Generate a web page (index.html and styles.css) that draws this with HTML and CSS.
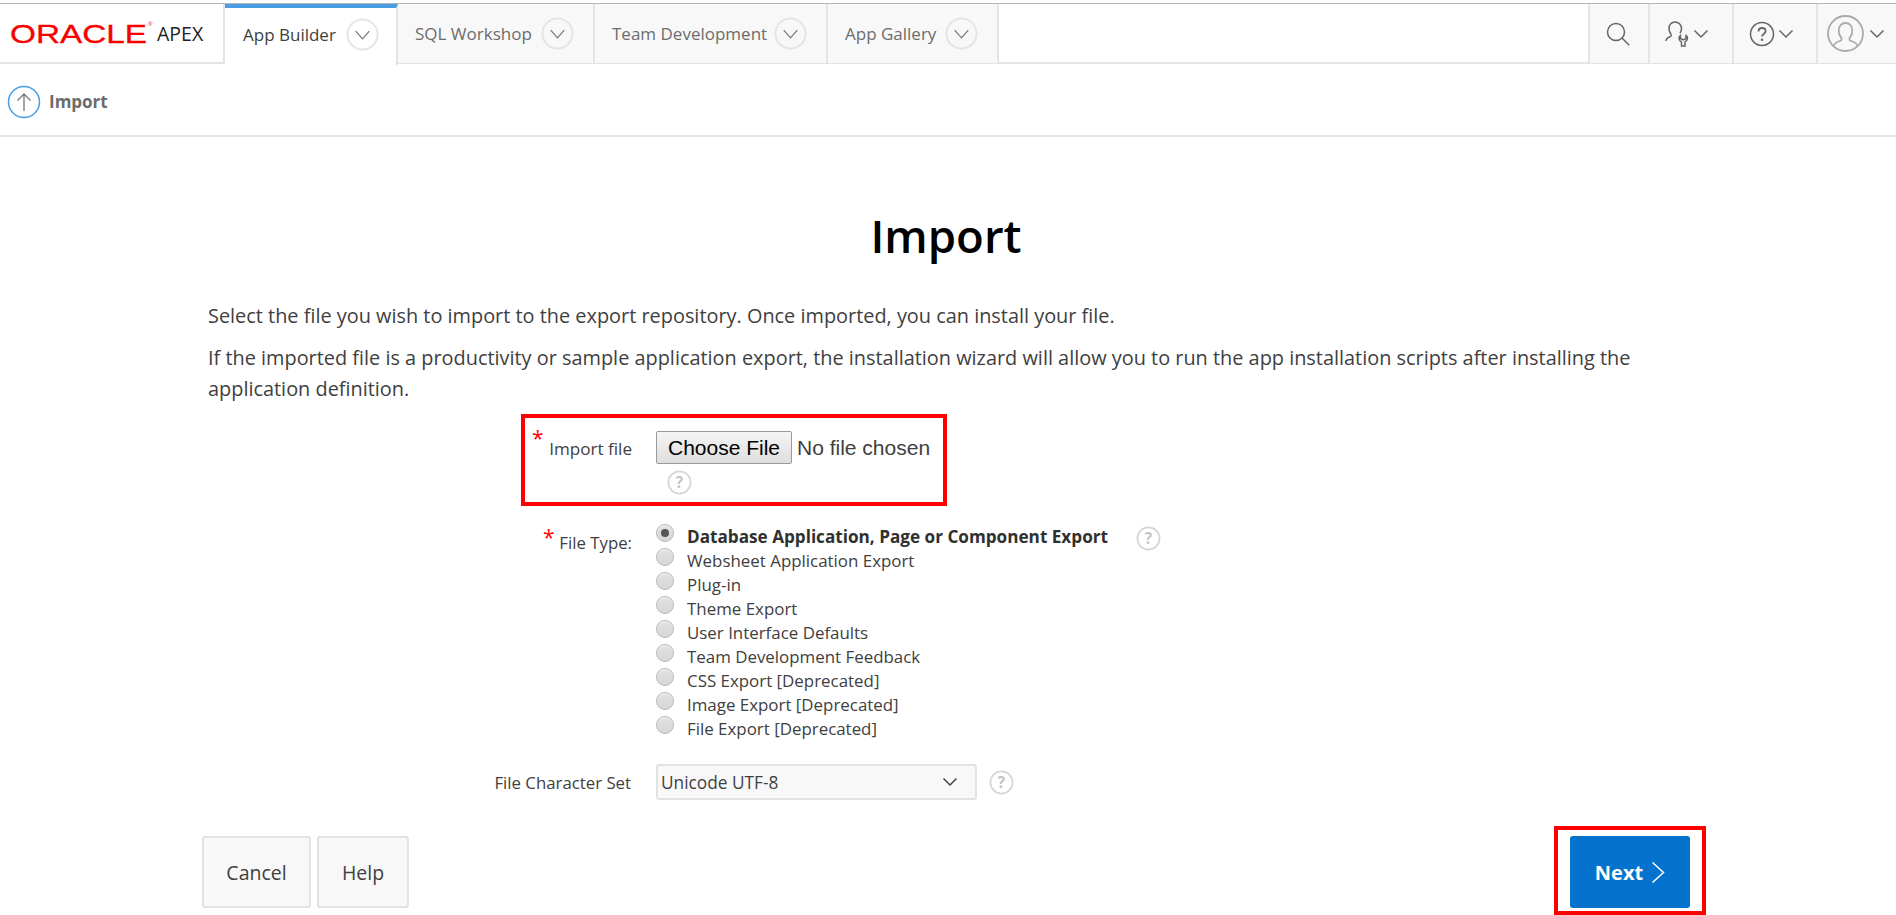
FILE: index.html
```html
<!DOCTYPE html>
<html lang="en">
<head>
<meta charset="utf-8">
<title>Import</title>
<link rel="stylesheet" href="styles.css">
</head>
<body>
<header class="topbar">
  <div class="logo">
    <div class="logo-mark"><span class="logo-oracle">ORACLE</span><span class="logo-reg">®</span></div>
    <span class="logo-apex">APEX</span>
  </div>
  <nav class="tabs">
    <div class="tab tab-active w-builder"><span>App Builder</span><svg class="tab-caret" viewBox="0 0 34 34"><circle cx="17" cy="17" r="15.5"/><path class="c" d="M10 13.5l7 8 7-8"/></svg></div>
    <div class="tab w-sql"><span>SQL Workshop</span><svg class="tab-caret" viewBox="0 0 34 34"><circle cx="17" cy="17" r="15.5"/><path class="c" d="M10 13.5l7 8 7-8"/></svg></div>
    <div class="tab w-team"><span>Team Development</span><svg class="tab-caret" viewBox="0 0 34 34"><circle cx="17" cy="17" r="15.5"/><path class="c" d="M10 13.5l7 8 7-8"/></svg></div>
    <div class="tab w-gallery"><span>App Gallery</span><svg class="tab-caret" viewBox="0 0 34 34"><circle cx="17" cy="17" r="15.5"/><path class="c" d="M10 13.5l7 8 7-8"/></svg></div>
  </nav>
  <div class="tools">
    <div class="tool w-search"><svg width="26" height="26" viewBox="0 0 26 26" class="ico"><circle cx="11" cy="11" r="8.5"/><path d="M17.2 17.2l7 7"/></svg></div>
    <div class="tool w-admin">
      <svg width="26" height="26" viewBox="0 0 26 26" class="ico"><path d="M1 20c0-3 2-3.500 4-4.200 1.300-.5 1.600-1.800.8-3C4.300 11 4 9.500 4 7.500 4 3.700 6.700 1 10 1s6.500 2.700 6.500 6.500c0 1.800-.5 3.300-1.500 4.800"/><path d="M15.500 14.500c-1.700 1-2 3.700-.5 5.200l1.500 1.300V25h3.500v-4l1.500-1.300c1.500-1.500 1.200-4.200-.5-5.200v3l-2.700 1.500-2.800-1.500z"/></svg>
      <svg width="16" height="10" viewBox="0 0 16 10" class="ico"><path d="M1.500 1.500l6.500 6.500 6.500-6.500"/></svg>
    </div>
    <div class="tool w-help">
      <svg width="26" height="26" viewBox="0 0 26 26" class="ico"><circle cx="13" cy="13" r="11.500"/><path class="q" d="M9.500 10.500c0-2.200 1.600-3.500 3.600-3.500s3.500 1.300 3.500 3.200c0 2.800-3.600 2.800-3.600 5.400"/><circle class="dot" cx="13" cy="18.800" r="1.200"/></svg>
      <svg width="16" height="10" viewBox="0 0 16 10" class="ico"><path d="M1.500 1.500l6.500 6.500 6.500-6.500"/></svg>
    </div>
    <div class="tool w-user">
      <svg width="37" height="37" viewBox="0 0 37 37" class="avatar"><circle cx="18.500" cy="18.500" r="17.500"/><path d="M6.500 31c1-3.500 3.500-4 6.500-5 2-.7 2-2.500 1-3.700-1.500-1.800-2.300-4-2.300-6.800 0-4.500 2.800-7.500 6.800-7.500s6.800 3 6.800 7.500c0 2.800-.8 5-2.300 6.800-1 1.200-1 3 1 3.700 3 1 5.500 1.500 6.500 5"/></svg>
      <svg width="16" height="10" viewBox="0 0 16 10" class="ico"><path d="M1.500 1.500l6.500 6.500 6.500-6.500"/></svg>
    </div>
  </div>
</header>

<div class="crumbbar">
  <svg class="up-icon" width="34" height="34" viewBox="0 0 34 34"><circle cx="17" cy="17" r="15.500"/><path d="M17 26V9M10.500 15.500L17 9l6.500 6.500"/></svg>
  <span class="crumb-text">Import</span>
</div>

<main class="page">
  <h1 class="title">Import</h1>
  <p class="intro intro-first">Select the file you wish to import to the export repository. Once imported, you can install your file.</p>
  <p class="intro">If the imported file is a productivity or sample application export, the installation wizard will allow you to run the app installation scripts after installing the application definition.</p>

  <form class="form">
    <div class="highlight-row">
      <div class="row row-file">
        <div class="label label-file"><span class="req">*</span>Import file</div>
        <div class="field">
          <div class="file-line"><button type="button" class="file-btn">Choose File</button><span class="file-none">No file chosen</span></div>
          <svg class="help help-file" viewBox="0 0 26 26"><circle cx="13" cy="13" r="11.500"/><text x="13" y="18.500" text-anchor="middle">?</text></svg>
        </div>
      </div>
    </div>

    <div class="row row-type">
      <div class="label label-type"><span class="req">*</span>File Type:</div>
      <div class="options">
        <div class="opt"><span class="radio radio-on"></span><b>Database Application, Page or Component Export</b><svg class="help help-opt" viewBox="0 0 26 26"><circle cx="13" cy="13" r="11.500"/><text x="13" y="18.500" text-anchor="middle">?</text></svg></div>
        <div class="opt"><span class="radio"></span>Websheet Application Export</div>
        <div class="opt"><span class="radio"></span>Plug-in</div>
        <div class="opt"><span class="radio"></span>Theme Export</div>
        <div class="opt"><span class="radio"></span>User Interface Defaults</div>
        <div class="opt"><span class="radio"></span>Team Development Feedback</div>
        <div class="opt"><span class="radio"></span>CSS Export [Deprecated]</div>
        <div class="opt"><span class="radio"></span>Image Export [Deprecated]</div>
        <div class="opt"><span class="radio"></span>File Export [Deprecated]</div>
      </div>
    </div>

    <div class="row row-charset">
      <div class="label label-charset">File Character Set</div>
      <div class="select"><span>Unicode UTF-8</span><svg width="16" height="10" viewBox="0 0 16 10" class="ico ico-dark"><path d="M1.500 1.500l6.500 6.500 6.500-6.500"/></svg></div>
      <svg class="help help-select" viewBox="0 0 26 26"><circle cx="13" cy="13" r="11.500"/><text x="13" y="18.500" text-anchor="middle">?</text></svg>
    </div>
  </form>

  <div class="actions">
    <div class="actions-left">
      <button type="button" class="btn btn-cancel">Cancel</button>
      <button type="button" class="btn btn-help">Help</button>
    </div>
    <div class="next-mark">
      <button type="button" class="btn-next">Next<svg width="14" height="23" viewBox="0 0 14 23"><path d="M1.500 1.500l11 10-11 10"/></svg></button>
    </div>
  </div>
</main>
</body>
</html>
```

FILE: styles.css
```css
* { box-sizing: border-box; }
html, body { margin: 0; padding: 0; height: 915px; overflow: hidden; }
body { background: #fff; font-family: "Open Sans", sans-serif; color: #404040; padding-top: 3px; }

.topbar { display: flex; height: 61px; border-top: 1px solid #b5b5b5; border-bottom: 2px solid #e4e4e4; }
.logo { width: 225px; flex: none; display: flex; align-items: center; padding-left: 10px; border-right: 2px solid #e4e4e4; height: 59px; }
.logo-mark { flex: none; width: 147px; height: 26px; position: relative; }
.logo-oracle { display: inline-block; font-family: "Liberation Sans", sans-serif; font-size: 25px; line-height: 26px; color: #f80000; -webkit-text-stroke: 0.300px #f80000; transform: scaleX(1.333); transform-origin: 0 50%; }
.logo-reg { position: absolute; left: 138px; top: -2px; font-family: "Liberation Sans", sans-serif; font-size: 6px; line-height: 10px; color: #f80000; }
.logo-apex { font-family: "Open Sans", sans-serif; font-size: 19.500px; line-height: 24px; color: #222; }

.tabs { display: flex; height: 61px; }
.tab { display: flex; align-items: center; justify-content: space-between; padding: 0 19px 0 17px; background: #f8f8f8; border-right: 2px solid #e4e4e4; height: 59px; font-size: 17px; color: #6c6c6c; }
.tab-active { background: #fff; color: #404040; border-top: 4px solid #4a9de5; height: 61px; margin-bottom: -2px; padding: 0 17px 0 18px; }
.tab-active span { position: relative; top: -2px; }
.tab-active .tab-caret { position: relative; top: -2px; }
.w-builder { width: 173px; }
.w-sql { width: 197px; }
.w-team { width: 233px; }
.w-gallery { width: 171px; }
.tab-caret { width: 33px; height: 33px; flex: none; fill: none; }
.tab-caret circle { stroke: #e4e4e4; stroke-width: 2; }
.tab-caret .c { stroke: #777; stroke-width: 1.300; }

.tools { display: flex; margin-left: auto; height: 59px; }
.tool { display: flex; align-items: center; justify-content: flex-start; background: #f8f8f8; border-left: 2px solid #e4e4e4; }
.w-search { width: 60px; padding-left: 15px; }
.w-admin { width: 84px; padding-left: 15px; gap: 2px; }
.w-help { width: 84px; padding-left: 15px; gap: 3px; }
.w-user { width: 80px; padding-left: 9px; gap: 5px; }
.ico { fill: none; stroke: #666; stroke-width: 1.500; }
.ico .q { stroke-width: 1.800; }
.ico .dot { fill: #666; stroke: none; }
.ico-dark { stroke: #444; }
.avatar { fill: none; stroke: #aaa; stroke-width: 1.800; }

.crumbbar { display: flex; align-items: center; gap: 8px; height: 73px; padding: 4px 0 0 7px; border-bottom: 2px solid #e4e4e4; }
.up-icon { fill: none; flex: none; }
.up-icon circle { stroke: #4a9de5; stroke-width: 1.500; }
.up-icon path { stroke: #777; stroke-width: 1.300; }
.crumb-text { font-size: 17px; font-weight: 700; color: #6c6c6c; }

.page { padding: 0 206px 0 202px; }
.title { margin: 0; padding-top: 65px; text-align: center; font-size: 45.500px; line-height: 66px; font-weight: 600; color: #000; }
.intro { margin: 0 0 11px 6px; font-size: 19.900px; line-height: 31px; color: #404040; }
.intro-first { margin-top: 32px; }

.form { display: flex; flex-direction: column; }
.highlight-row { width: 426px; height: 92px; margin: -1px 0 0 319px; border: 4px solid #f00; }
.row { display: flex; }
.row-file { height: 84px; }
.label { font-size: 16.800px; text-align: right; color: #404040; position: relative; }
.req { color: #f00; font-size: 21px; position: absolute; line-height: 1; }
.label-file { width: 107px; padding-top: 19px; flex: none; font-size: 17.100px; }
.label-file .req { left: 7px; top: 10px; }
.field { margin-left: 24px; padding-top: 13px; display: flex; flex-direction: column; }
.file-line { display: flex; align-items: center; height: 33px; }
.file-btn { width: 136px; height: 33px; padding: 0; font-family: "Liberation Sans", sans-serif; font-size: 21px; color: #000; background: linear-gradient(#f5f5f5, #dedede); border: 1px solid #9a9a9a; border-radius: 2px; }
.file-none { margin-left: 5px; font-family: "Liberation Sans", sans-serif; font-size: 21px; color: #404040; }
.help { fill: none; flex: none; width: 25px; height: 25px; }
.help circle { stroke: #d6d6d6; stroke-width: 1.800; }
.help text { font-family: "Open Sans", sans-serif; font-size: 16px; font-weight: 700; fill: #c4c4c4; stroke: none; }
.help-file { margin: 6px 0 0 11px; }

.row-type { margin-top: 19px; }
.label-type { width: 430px; padding-top: 6px; margin-right: 24px; flex: none; }
.label-type .req { left: 341px; top: 2px; }
.options { display: flex; flex-direction: column; }
.opt { display: flex; align-items: flex-start; height: 24px; font-size: 16.900px; line-height: 24px; white-space: nowrap; color: #404040; }
.opt b { color: #303030; font-weight: 700; font-size: 17.150px; }
.radio { width: 18px; height: 18px; flex: none; margin: -1px 13px 0 0; border-radius: 50%; border: 1px solid #b8b8b8; background: linear-gradient(#e2e2e2, #d6d6d6); box-shadow: inset 0 1px 1px #f2f2f2; position: relative; }
.radio-on::after { content: ""; position: absolute; left: 4px; top: 4px; width: 8px; height: 8px; border-radius: 50%; background: #555; }
.help-opt { margin: 1px 0 0 28px; }

.row-charset { margin-top: 23px; align-items: center; }
.label-charset { width: 429px; margin-right: 25px; flex: none; }
.select { width: 321px; height: 36px; display: flex; align-items: center; justify-content: space-between; padding: 0 17px 0 3px; font-size: 17.300px; background: #f8f8f8; border: 2px solid #e2e2e2; border-radius: 3px; color: #404040; }
.help-select { margin-left: 12px; }

.actions { display: flex; justify-content: space-between; align-items: flex-start; margin-top: 26px; }
.actions-left { display: flex; gap: 6px; margin-top: 10px; }
.btn { height: 72px; font-family: "Open Sans", sans-serif; font-size: 19.500px; color: #404040; background: #f8f8f8; border: 2px solid #e2e2e2; border-radius: 3px; padding: 0; }
.btn-cancel { width: 109px; }
.btn-help { width: 92px; }
.next-mark { width: 152px; height: 89px; border: 4px solid #f00; padding: 6px 12px 0; margin-right: -16px; flex: none; }
.btn-next { width: 120px; height: 72px; display: flex; align-items: center; justify-content: center; gap: 8px; padding: 0; border: 0; border-radius: 3px; background: #0572ce; color: #fff; font-family: "Open Sans", sans-serif; font-size: 20px; font-weight: 700; }
.btn-next svg { fill: none; stroke: #fff; stroke-width: 1.500; }
```
